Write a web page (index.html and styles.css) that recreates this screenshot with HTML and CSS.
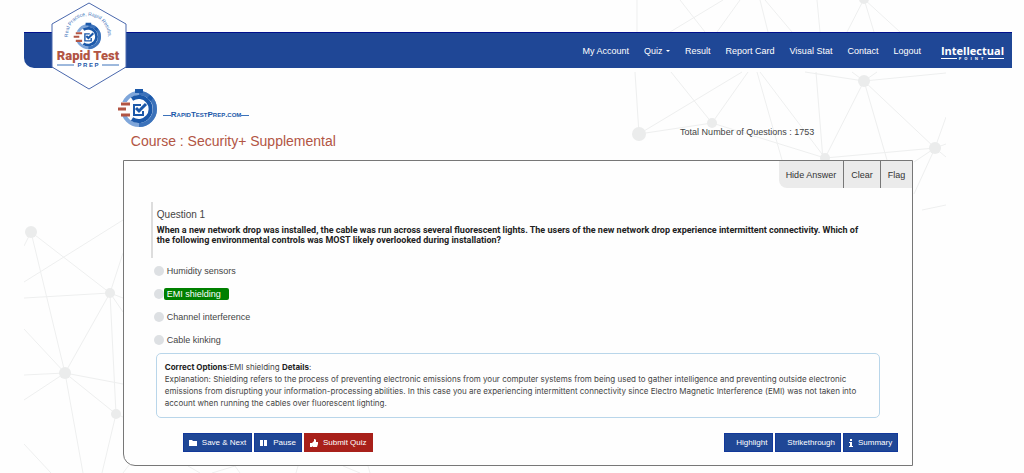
FILE: index.html
```html
<!DOCTYPE html>
<html lang="en">
<head>
    <meta charset="UTF-8">
    <meta name="viewport" content="width=device-width, initial-scale=1.0">
    <title>Security+ Supplemental - Rapid Test Prep</title>
    <link rel="stylesheet" href="styles.css">
</head>
<body>
    <!-- Network pattern behind the page -->
    <svg class="network" width="922" height="473" viewBox="24 0 922 473" aria-hidden="true">
        <g stroke="#eeefef" stroke-width="1" fill="none">
            <path d="M635 72L639 134L742 72M671 72L712 123L748 72M639 134L712 123L825 158M757 72L782 160M760 72L825 158L864 81L887 160M816 72L823 160M825 158L935 148L864 81L852 72M805 72L864 81L946 73M864 81L877 72M935 148L946 117M935 148L946 157M935 148L914 162M935 148L914 194M935 148L946 144M922 210L946 205"/>
            <path d="M637 0V32M680 0L705 32M723 0L670 32M740 0L717 32M760 0L768 32M765 0L792 32M817 0L820 32M864 -1L847 32M864 -1L874 32M864 -1L900 32"/>
            <path d="M31 232L24 246M31 232L110 293L123 253M31 232L65 373L110 293L24 298M24 282L123 220M110 293L123 298M110 293L123 312M110 293L116 414L65 373M24 329L65 373L24 375M65 373L24 400M65 373L123 384M65 373L83 473M116 414L102 473M116 414L123 417M24 444L51 473M123 473L129 465M188 466L200 473M212 473L235 466L240 473M298 466L296 473M343 466L360 473M368 466L370 473"/>
        </g>
        <g fill="#ebecec">
            <circle cx="864" cy="-1" r="5"/>
            <circle cx="639" cy="134" r="7"/>
            <circle cx="712" cy="123" r="5"/>
            <circle cx="825" cy="158" r="5"/>
            <circle cx="864" cy="81" r="6"/>
            <circle cx="935" cy="148" r="6"/>
            <circle cx="31" cy="232" r="6"/>
            <circle cx="110" cy="293" r="5"/>
            <circle cx="65" cy="373" r="6"/>
            <circle cx="116" cy="414" r="5"/>
        </g>
    </svg>

    <!-- Shared icons -->
    <svg class="sprite" aria-hidden="true">
        <symbol id="stopwatch" viewBox="0 0 40 40">
            <circle cx="22" cy="21" r="16" fill="none" stroke="#7fa6da" stroke-width="4"/>
            <path d="M22 5a16 16 0 0 1 0 32" fill="none" stroke="#3c72ba" stroke-width="4"/>
            <path d="M15 11a12 12 0 1 1 0 20" fill="none" stroke="#1b58a9" stroke-width="4"/>
            <path d="M18 1h8v4h-8zM33 7l3 3-2 3-4-3z" fill="#1b58a9"/>
            <path d="M24 17h-7v10h9v-4" fill="none" stroke="#1b58a9" stroke-width="2"/>
            <path d="M19 20l3 3 7-7" fill="none" stroke="#1b58a9" stroke-width="3"/>
            <path d="M3 14h10v14H3z" fill="#fff"/>
            <path d="M4 16h9M1 21h8M4 27h9" stroke="#b25544" stroke-width="3"/>
        </symbol>
    </svg>

    <header class="topbar">
        <a href="#" class="brand" aria-label="Rapid Test Prep">
            <svg width="76" height="88" viewBox="0 0 76 88">
                <path d="M38 1L75 22V65L38 87L1 65V22z" fill="#fff" stroke="#4a68ad"/>
                <path id="arc" d="M18 40A20 20 0 1 1 56 40" fill="none"/>
                <text class="brand-arc"><textPath href="#arc" startOffset="50%">Real Practice, Rapid Results.</textPath></text>
                <use href="#stopwatch" x="22" y="20" width="28" height="28"/>
                <text x="37" y="58" class="brand-name">Rapid Test</text>
                <path d="M6 63h17M51 63h17" stroke="#3c72ba"/>
                <text x="37" y="65" class="brand-sub">P R E P</text>
            </svg>
        </a>
        <nav>
            <a href="#">My Account</a>
            <a href="#">Quiz <span class="caret"></span></a>
            <a href="#">Result</a>
            <a href="#">Report Card</a>
            <a href="#">Visual Stat</a>
            <a href="#">Contact</a>
            <a href="#">Logout</a>
        </nav>
        <a href="#" class="partner">
            <span>Intellectual</span>
            <small>POINT</small>
        </a>
    </header>

    <main>
        <div class="course-head">
            <div class="course">
                <div class="site-logo">
                    <svg width="40" height="40"><use href="#stopwatch"/></svg>
                    <span class="site-name">RapidTestPrep.com</span>
                </div>
                <h1>Course : Security+ Supplemental</h1>
            </div>
            <p class="total">Total Number of Questions : 1753</p>
        </div>

        <form class="card">
            <div class="tools">
                <button type="button">Hide Answer</button>
                <button type="button">Clear</button>
                <button type="button">Flag</button>
            </div>

            <div class="question">
                <h2>Question 1</h2>
                <p>When a new network drop was installed, the cable was run across several fluorescent lights. The users of the new network drop experience intermittent connectivity. Which of the following environmental controls was MOST likely overlooked during installation?</p>
            </div>

            <div class="options">
                <label><input type="radio" name="answer"><span>Humidity sensors</span></label>
                <label><input type="radio" name="answer"><span class="correct">EMI shielding</span></label>
                <label><input type="radio" name="answer"><span>Channel interference</span></label>
                <label><input type="radio" name="answer"><span>Cable kinking</span></label>
            </div>

            <div class="explanation">
                <b>Correct Options</b>:EMI shielding <b>Details</b>:<br>
                Explanation: Shielding refers to the process of preventing electronic emissions from your computer systems from being used to gather intelligence and preventing outside electronic emissions from disrupting your information-processing abilities. In this case you are experiencing intermittent connectivity since Electro Magnetic Interference (EMI) was not taken into account when running the cables over fluorescent lighting.
            </div>

            <div class="actions">
                <button type="button" class="btn">
                    <svg width="8" height="8" viewBox="0 0 8 8"><path d="M0 1h3l1 1h4v5H0z"/></svg>
                    Save &amp; Next
                </button>
                <button type="button" class="btn">
                    <svg width="8" height="8" viewBox="0 0 8 8"><path d="M0 1h3v6H0zM4 1h3v6H4z"/></svg>
                    Pause
                </button>
                <button type="button" class="btn btn-submit">
                    <svg width="8" height="8" viewBox="0 0 8 8"><path d="M0 4h2v4H0zM2 4l2-2V0h1l1 1v2h2v2L7 8H3L2 7z"/></svg>
                    Submit Quiz
                </button>
                <span class="spacer"></span>
                <button type="button" class="btn btn-plain">Highlight</button>
                <button type="button" class="btn btn-plain">Strikethrough</button>
                <button type="button" class="btn">
                    <svg width="4" height="8" viewBox="0 0 4 8"><path d="M1 0h2v2H1zM0 3h3v4h1v1H0V7h1V4H0z"/></svg>
                    Summary
                </button>
            </div>
        </form>
    </main>
</body>
</html>
```
FILE: styles.css
```css
body {
    font-family: "Liberation Sans", Arial, sans-serif;
    background-color: #fefefe;
    margin: 0;
    padding: 32px 12px 0 24px;
    color: #444;
    font-size: 9px;
    line-height: 12px;
}

/* Background pattern */
.network {
    position: absolute;
    top: 0;
    left: 24px;
    z-index: -1;
}

.sprite {
    position: absolute;
    width: 0;
    height: 0;
}

/* Top bar */
.topbar {
    position: relative;
    display: flex;
    justify-content: flex-end;
    align-items: center;
    box-sizing: border-box;
    height: 36px;
    padding-right: 8px;
    background: #1f4796;
    border-top: 1px solid #00108c;
    border-bottom-left-radius: 10px;
}

.brand {
    position: absolute;
    top: -31px;
    left: 27px;
}

.brand svg {
    display: block;
}

.brand-arc {
    font-size: 5px;
    text-anchor: middle;
    fill: #3c72ba;
}

.brand-name {
    font-family: Roboto, "Liberation Sans", sans-serif;
    font-size: 13px;
    font-weight: 900;
    text-anchor: middle;
    fill: #b25544;
}

.brand-sub {
    font-size: 6px;
    font-weight: bold;
    text-anchor: middle;
    fill: #1b58a9;
}

nav {
    display: flex;
    gap: 15px;
    margin-right: 20px;
}

nav a {
    color: #fff;
    text-decoration: none;
}

.caret {
    display: inline-block;
    border: 2px solid transparent;
    border-top-color: #fff;
    border-bottom: 0;
    margin-left: 1px;
    vertical-align: middle;
}

.partner {
    display: flex;
    flex-direction: column;
    padding-top: 4px;
    color: #fff;
    text-decoration: none;
    font-family: "Open Sans", sans-serif;
    font-size: 11px;
    font-weight: bold;
}

.partner small {
    display: flex;
    align-items: center;
    gap: 2px;
    font-size: 4px;
    line-height: 4px;
    letter-spacing: 3px;
}

.partner small::before,
.partner small::after {
    content: "";
    flex: 1;
    height: 1px;
    background: #fff;
}

/* Course heading */
main {
    width: 80%;
    margin: 0 auto;
}

.course-head {
    display: flex;
    height: 92px;
}

.course {
    flex: 1;
}

.site-logo {
    display: flex;
    align-items: center;
    gap: 6px;
    margin: 20px 0 0 -6px;
}

.site-name {
    display: flex;
    align-items: center;
    margin-top: 14px;
    font-size: 8px;
    font-weight: bold;
    font-variant: small-caps;
    color: #1b58a9;
}

.site-name::before,
.site-name::after {
    content: "";
    width: 8px;
    height: 1px;
    background: #3c72ba;
}

h1 {
    margin: 4px 0 0 8px;
    font-size: 14px;
    font-weight: normal;
    line-height: 18px;
    color: #b25544;
}

.total {
    margin: 58px 99px 0 0;
}

/* Question card */
.card {
    box-sizing: border-box;
    background: #fefefe;
    border: 1px solid #777;
    border-bottom-left-radius: 12px;
    padding: 0 14px 13px 27px;
}

.tools {
    display: flex;
    width: max-content;
    margin: 0 -14px 0 auto;
    background: #ebebeb;
    border-bottom-left-radius: 8px;
}

.tools button {
    height: 27px;
    padding: 0 7px;
    border: 0;
    border-left: 1px solid #777;
    background: none;
    color: #333;
    font: inherit;
}

.tools button:first-child {
    border-left: 0;
}

.question {
    box-sizing: border-box;
    height: 56px;
    margin: 14px 20px 0 0;
    padding: 7px 0 0 4px;
    border-left: 2px solid #ddd;
}

.question h2 {
    margin: 0 0 4px;
    font-size: 10px;
    font-weight: normal;
    line-height: 12px;
}

.question p {
    margin: 0;
    padding-right: 12px;
    font-family: Roboto, "Liberation Sans", sans-serif;
    font-weight: bold;
    line-height: 10px;
    color: #222;
}

.options {
    display: grid;
    gap: 11px;
    margin: 7px 0 0 3px;
}

.options label {
    display: flex;
    align-items: center;
}

.options input {
    appearance: none;
    width: 10px;
    height: 10px;
    margin: 0;
    border-radius: 50%;
    background: #dde0e3;
}

.options span {
    padding: 0 3px;
}

.options .correct {
    padding-right: 8px;
    border-radius: 2px;
    background: #008000;
    color: #fff;
}

.explanation {
    margin: 7px 18px 0 5px;
    padding: 7px 8px 8px;
    border: 1px solid #b9d6ea;
    border-radius: 5px;
    font-family: Inter, "Liberation Sans", sans-serif;
    font-size: 8px;
}

.explanation b {
    color: #222;
}

.actions {
    display: flex;
    gap: 2px;
    margin: 15px 0 0 32px;
}

.btn {
    display: flex;
    align-items: center;
    gap: 5px;
    height: 19px;
    padding: 0 5px;
    border: 1px solid #12389a;
    background: #1f4796;
    color: #fff;
    font: inherit;
    font-size: 8px;
}

.btn svg {
    fill: #fff;
}

.btn-submit {
    border-color: #a8201a;
    background: #a8201a;
}

.btn-plain {
    padding-left: 11px;
}

.spacer {
    flex: 1;
}
```
